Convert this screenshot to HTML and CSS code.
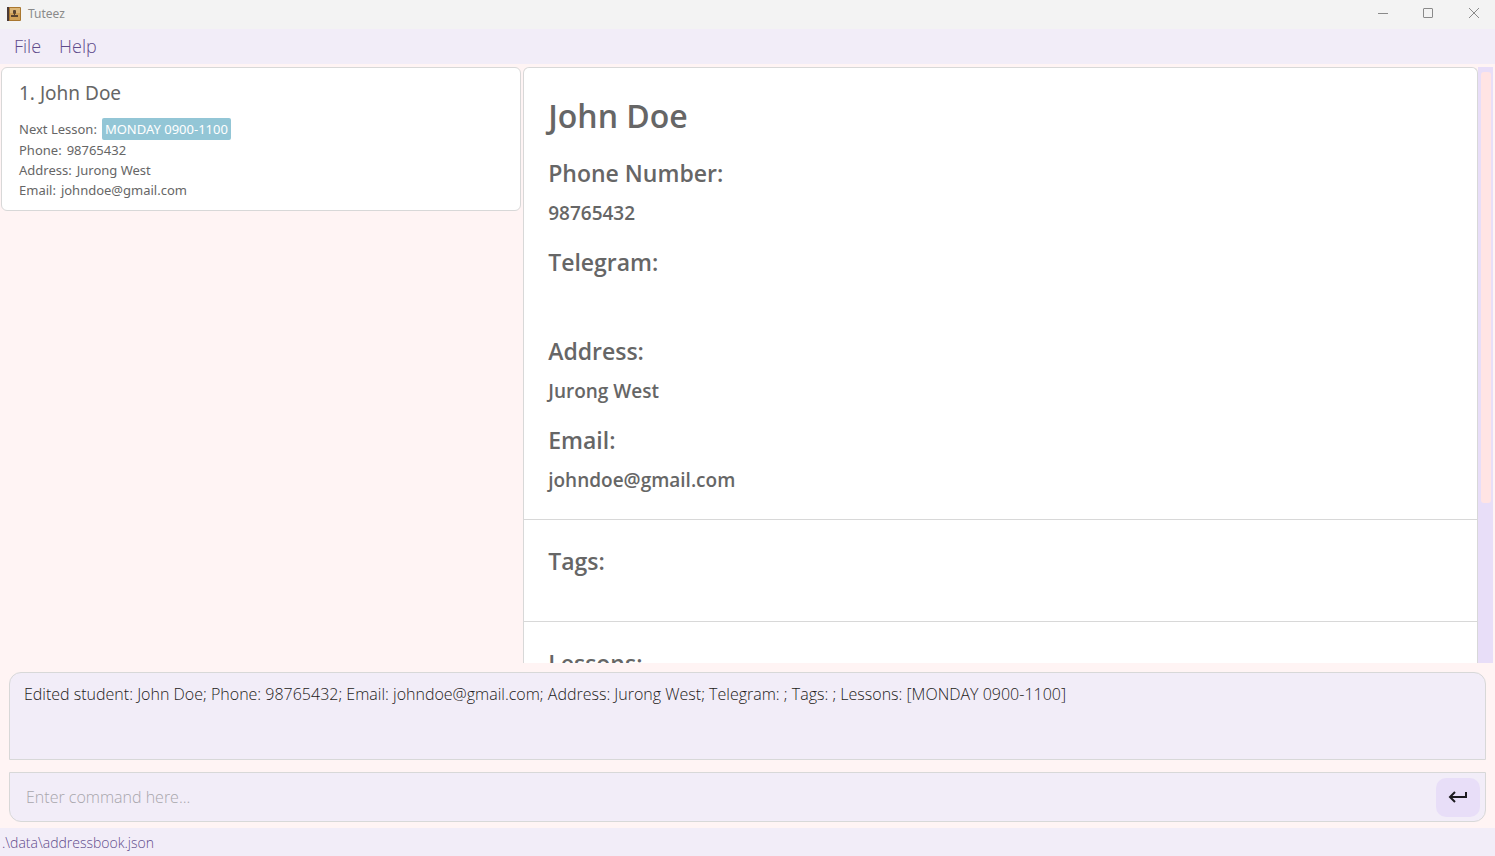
FILE: index.html
```html
<!DOCTYPE html>
<html lang="en">
<head>
<meta charset="utf-8">
<title>Tuteez</title>
<link rel="stylesheet" href="styles.css">
</head>
<body>
<div class="window">
  <header class="titlebar">
    <svg class="app-icon" width="16" height="16" viewBox="0 0 16 16" aria-hidden="true">
      <rect x="1" y="1" width="14" height="14" rx="1" fill="#a9772f"/>
      <rect x="4" y="2" width="10" height="12" fill="#d0a258"/>
      <rect x="4" y="2" width="10" height="5" fill="#dcb676"/>
      <rect x="1" y="1" width="2" height="14" fill="#4a3a36"/>
      <rect x="7" y="4" width="3" height="4" rx="1" fill="#5a4530"/>
      <path d="M8 7h1v2h3v2H5V9h3z" fill="#5a4530"/>
    </svg>
    <span class="app-title">Tuteez</span>
    <div class="window-controls">
      <button class="window-button" type="button" aria-label="Minimize"><svg width="12" height="12" viewBox="0 0 12 12"><path d="M1 5.500h10"/></svg></button>
      <button class="window-button" type="button" aria-label="Maximize"><svg width="12" height="12" viewBox="0 0 12 12"><rect x="1.500" y="0.500" width="9" height="9" rx="0.500"/></svg></button>
      <button class="window-button" type="button" aria-label="Close"><svg width="12" height="12" viewBox="0 0 12 12"><path d="M2 0l10 10M12 0L2 10"/></svg></button>
    </div>
  </header>
  <nav class="menubar">
    <button class="menu" type="button">File</button>
    <button class="menu" type="button">Help</button>
  </nav>
  <main class="panes">
    <section class="student-list">
      <article class="student-card">
        <h2 class="student-name">1. John Doe</h2>
        <p class="student-line">Next Lesson: <span class="lesson-tag">MONDAY 0900-1100</span></p>
        <p class="student-line">Phone: <span>98765432</span></p>
        <p class="student-line">Address: <span>Jurong West</span></p>
        <p class="student-line">Email: <span>johndoe@gmail.com</span></p>
      </article>
    </section>
    <section class="detail">
      <div class="detail-card">
        <div class="detail-section">
          <h1 class="detail-name">John Doe</h1>
          <dl class="fields">
            <dt class="field-label">Phone Number:</dt>
            <dd class="field-value">98765432</dd>
            <dt class="field-label">Telegram:</dt>
            <dd class="field-value"></dd>
            <dt class="field-label">Address:</dt>
            <dd class="field-value">Jurong West</dd>
            <dt class="field-label">Email:</dt>
            <dd class="field-value">johndoe@gmail.com</dd>
          </dl>
        </div>
        <div class="detail-section tags"><h2 class="field-label">Tags:</h2></div>
        <div class="detail-section"><h2 class="field-label">Lessons:</h2></div>
      </div>
      <div class="scroll-track"><div class="scroll-thumb"></div></div>
    </section>
  </main>
  <section class="console">
    <textarea class="result" readonly aria-label="Result">Edited student: John Doe; Phone: 98765432; Email: johndoe@gmail.com; Address: Jurong West; Telegram: ; Tags: ; Lessons: [MONDAY 0900-1100]</textarea>
    <form class="command">
      <input class="command-input" type="text" placeholder="Enter command here..." aria-label="Command">
      <button class="enter" type="button" aria-label="Enter">
        <svg width="20" height="14" viewBox="0 0 20 14"><path d="M18 2v5H3M7 2L2 7l5 5"/></svg>
      </button>
    </form>
  </section>
  <footer class="statusbar">.\data\addressbook.json</footer>
</div>
</body>
</html>
```
FILE: styles.css
```css
* {
  box-sizing: border-box;
}

body,
h1,
h2,
p,
dl,
dd {
  margin: 0;
}

body,
button,
input,
textarea {
  font-family: "Open Sans", "Noto Sans", sans-serif;
}

.window {
  display: flex;
  flex-direction: column;
  height: 100vh;
  overflow: hidden;
  background: #fff4f4;
  color: #666;
}

.titlebar {
  display: flex;
  align-items: center;
  height: 29px;
  padding-left: 6px;
  padding-bottom: 2px;
  background: #f3f3f3;
}

.app-title {
  margin-left: 6px;
  font-family: "Noto Sans", sans-serif;
  font-size: 12px;
  line-height: 16px;
  color: #8a8a8a;
}

.window-controls {
  display: flex;
  margin-left: auto;
}

.window-button {
  display: flex;
  align-items: center;
  justify-content: center;
  width: 45px;
  height: 27px;
  padding: 0;
  border: 0;
  background: none;
}

.window-button svg {
  fill: none;
  stroke: #8a8a8a;
}

.menubar {
  display: flex;
  gap: 18px;
  height: 35px;
  padding: 0 14px 2px;
  background: #f2edf8;
}

.menu {
  padding: 0;
  border: 0;
  background: none;
  font-size: 18px;
  font-weight: 300;
  color: #5f4b8b;
}

.panes {
  display: flex;
  flex: 1;
  min-height: 0;
  gap: 2px;
  padding: 3px 2px 0 1px;
}

.student-list {
  width: 35%;
  padding-right: 2px;
}

.student-list,
.student-name {
  font-family: "Noto Sans", sans-serif;
}

.student-card {
  padding: 10px 17px;
  border: 1px solid #d8d8d8;
  border-radius: 6px;
  background: #fff;
}

.student-name {
  margin-bottom: 10px;
  font-size: 19px;
  font-weight: 400;
  line-height: 30px;
}

.student-line {
  display: flex;
  align-items: center;
  gap: 5px;
  font-size: 13px;
  line-height: 20px;
}

.lesson-tag {
  padding: 1px 3px;
  border-radius: 2px;
  background: #93c6d6;
  color: #fff;
}

.detail {
  display: flex;
  flex: 1;
  min-width: 0;
  margin-left: -2px;
}

.detail-card {
  flex: 1;
  overflow: hidden;
  border: 1px solid #d8d8d8;
  border-bottom: 0;
  border-radius: 6px 6px 0 0;
  background: #fff;
}

.detail-section {
  padding: 24px;
}

.detail-section + .detail-section {
  border-top: 1px solid #d8d8d8;
}

.tags {
  min-height: 102px;
}

.detail-name {
  margin-bottom: 16px;
  font-size: 32px;
  font-weight: 600;
  line-height: 48px;
}

.field-label {
  font-size: 23px;
  font-weight: 600;
  line-height: 34px;
}

.field-value {
  min-height: 28px;
  margin: 9px 0 18px;
  font-size: 19px;
  font-weight: 600;
  line-height: 28px;
}

.field-value:last-child {
  margin-bottom: 1px;
}

.scroll-track {
  width: 15px;
  padding: 5px 2px 0 3px;
  background: #e8def8;
}

.scroll-thumb {
  height: 73%;
  border-radius: 3px;
  background: #ffe4e4;
}

.console {
  display: flex;
  flex-direction: column;
  gap: 12px;
  padding: 9px 9px 6px;
}

.result {
  display: block;
  width: 100%;
  height: 88px;
  padding: 10px 14px;
  border: 1px solid #d8d8d8;
  border-radius: 12px 12px 0 0;
  outline: 0;
  background: #f2edf8;
  font-size: 16px;
  font-weight: 300;
  line-height: 23px;
  color: #1d1b20;
  resize: none;
}

.command {
  display: flex;
  align-items: center;
  height: 50px;
  padding: 0 5px 0 16px;
  border: 1px solid #d8d8d8;
  border-radius: 0 0 12px 12px;
  background: #f2edf8;
}

.command-input {
  flex: 1;
  min-width: 0;
  padding: 0;
  border: 0;
  outline: 0;
  background: none;
  font-size: 16px;
  font-weight: 300;
  color: #1d1b20;
}

.command-input::placeholder {
  color: #a8a6ac;
}

.enter {
  display: flex;
  align-items: center;
  justify-content: center;
  width: 44px;
  height: 39px;
  padding: 0;
  border: 0;
  border-radius: 10px;
  background: #e8def8;
}

.enter svg {
  fill: none;
  stroke: #1d1b20;
  stroke-width: 2;
}

.statusbar {
  height: 28px;
  padding: 0 2px;
  background: #f2edf8;
  font-size: 14px;
  font-weight: 300;
  line-height: 30px;
  color: #5f4b8b;
}
```
